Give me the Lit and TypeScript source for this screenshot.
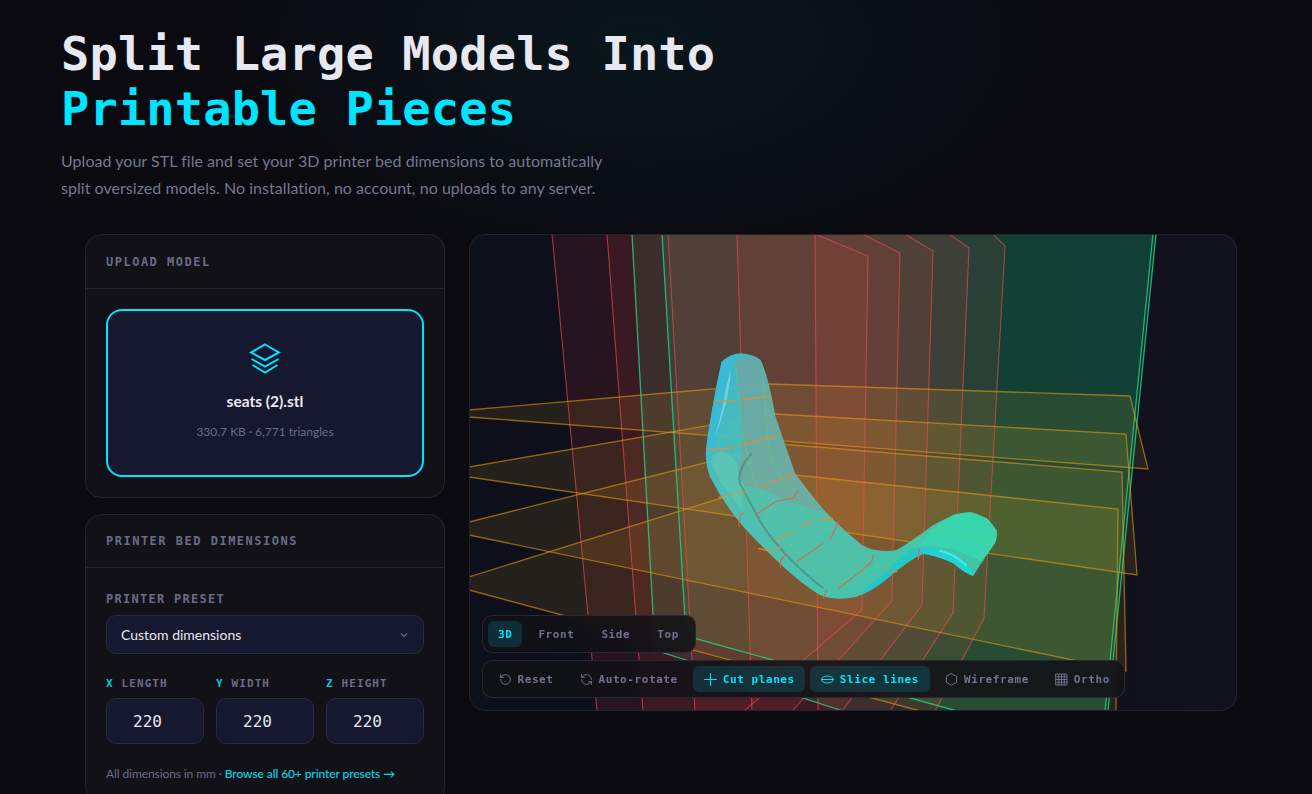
import { LitElement, html, css, svg } from "lit";
import { customElement } from "lit/decorators.js";

type Pt = [number, number];
const pts = (p: Pt[]) => p.map((q) => q.join(",")).join(" ");

const RED: Pt[][] = [
  [[552,234],[815,234],[868,256],[862,610],[744,711],[597,711]],
  [[607,234],[862,234],[900,253],[892,601],[792,711],[643,711]],
  [[668,234],[905,234],[933,251],[922,605],[842,711],[695,711]],
  [[737,234],[949,234],[969,248],[953,613],[890,711],[752,711]],
  [[815,234],[993,234],[1005,246],[984,618],[935,711],[818,711]],
];
const GREEN: Pt[][] = [
  [[632,234],[1153,234],[1105,711],[843,711],[655,650]],
  [[662,234],[1156,234],[1108,711],[957,711],[686,636]],
];
const YELLOW: Pt[][] = [
  [[469,410],[770,384],[1130,396],[1148,469],[469,417]],
  [[469,467],[775,414],[1126,434],[1137,575],[469,477]],
  [[469,522],[780,444],[1122,472],[1126,671],[469,535]],
  [[469,577],[795,475],[1118,509],[1116,711],[920,711],[469,590]],
];

const ORANGE_SLICES = [
  "M105 182Q140 184 170 181M185 179L272 169",
  "M78 325Q130 328 160 322M175 318L295 287",
  "M115 472L160 464M175 458L200 455M240 440L345 402",
  "M285 600L340 575M360 562L400 540M420 538L460 535",
  "M235 625Q270 635 285 630Q298 628 302 618",
  "M610 690L618 680M632 697L652 694",
];
const RED_SLICES = [
  "M178 562Q172 535 190 517",
  "M225 525L290 483L340 475L355 450",
  "M450 600L475 545",
  "M302 682Q298 650 325 642",
  "M350 665L430 610",
  "M430 775L440 750",
  "M475 745L535 700L575 665L580 645",
  "M715 660L718 625",
];
const GREEN_SLICES = [
  "M165 65Q178 150 182 220Q190 330 240 470Q290 580 370 650Q440 710 525 742",
  "M245 70Q255 170 265 320Q290 400 320 450Q350 500 400 540",
  "M540 692Q620 680 680 640Q740 575 790 555Q860 530 920 590Q925 640 905 672",
  "M690 610Q760 560 800 575Q860 575 935 620",
];

const TABS = [
  { label: "3D", on: true },
  { label: "Front" },
  { label: "Side" },
  { label: "Top" },
];

const ICONS = {
  reset: svg`<path d="M3 12a9 9 0 1 0 9-9 9.75 9.75 0 0 0-6.74 2.74L3 8"/><path d="M3 3v5h5"/>`,
  rotate: svg`<path d="M21 12a9 9 0 0 0-9-9 9.75 9.75 0 0 0-6.74 2.74L3 8"/><path d="M3 3v5h5"/><path d="M3 12a9 9 0 0 0 9 9 9.75 9.75 0 0 0 6.74-2.74L21 16"/><path d="M16 16h5v5"/>`,
  plus: svg`<path d="M12 1v22M1 12h22"/>`,
  slice: svg`<ellipse cx="12" cy="12" rx="11" ry="6.5"/><path d="M1 12h22"/>`,
  hex: svg`<path d="M12 1.5l9.5 5.2v10.6L12 22.5l-9.5-5.2V6.7z"/>`,
  grid: svg`<rect x="2" y="2" width="20" height="20"/><path d="M7 2v20M12 2v20M17 2v20M2 7h20M2 12h20M2 17h20"/>`,
};

const ACTIONS = [
  { label: "Reset", icon: ICONS.reset },
  { label: "Auto-rotate", icon: ICONS.rotate },
  { label: "Cut planes", icon: ICONS.plus, on: true },
  { label: "Slice lines", icon: ICONS.slice, on: true },
  { label: "Wireframe", icon: ICONS.hex },
  { label: "Ortho", icon: ICONS.grid },
];

const DIMS = [
  { axis: "X", name: "LENGTH" },
  { axis: "Y", name: "WIDTH" },
  { axis: "Z", name: "HEIGHT" },
];

@customElement("app-root")
export class AppRoot extends LitElement {
  static styles = css`
    :host {
      display: block;
      width: 1312px;
      height: 794px;
      overflow: hidden;
      background:
        radial-gradient(ellipse 420px 230px at 640px 40px, rgba(0, 229, 255, 0.055), transparent 100%),
        #0a0a10;
      color: #e8e8f0;
      font-family: "Lato", "Open Sans", sans-serif;
    }
    .hero { padding: 26px 0 0 61px; height: 234px; box-sizing: border-box; }
    h1 {
      margin: 0;
      font: 700 47px/55px "DejaVu Sans Mono", monospace;
      letter-spacing: 0.15px;
      color: #e8e8f0;
    }
    h1 span { color: #00e5ff; display: block; }
    .hero p {
      margin: 11px 0 0;
      font-size: 16px;
      line-height: 27px;
      letter-spacing: 0.04px;
      color: #77778f;
      width: 560px;
    }
    .main { display: flex; gap: 24px; padding-left: 85px; align-items: flex-start; }
    .left { width: 360px; display: flex; flex-direction: column; gap: 16px; flex: none; }
    .card {
      background: #111117;
      border: 1px solid #23232c;
      border-radius: 16px;
      box-sizing: border-box;
    }
    .card-head {
      height: 54px;
      padding: 0 20px;
      display: flex;
      align-items: center;
      border-bottom: 1px solid #23232c;
      font: 700 12px "DejaVu Sans Mono", monospace;
      letter-spacing: 1.5px;
      color: #6b6b8a;
      box-sizing: border-box;
    }
    .card-head.b { height: 53px; }
    .card-body { padding: 20px; }
    .card-body.bed { padding-top: 23px; }
    .drop {
      height: 168px;
      border: 2px solid #00e5ff;
      border-radius: 16px;
      background: #161830;
      box-sizing: border-box;
      display: flex;
      flex-direction: column;
      align-items: center;
    }
    .drop svg { margin-top: 32px; display: block; fill: none; stroke: #00e5ff; stroke-width: 2; }
    .fname { margin-top: 16px; font-size: 15.5px; font-weight: 700; color: #e8e8f0; line-height: 20px; }
    .fmeta { margin-top: 12px; font-size: 12px; color: #6b6b8a; line-height: 18px; }
    .label {
      font: 700 12px/16px "DejaVu Sans Mono", monospace;
      letter-spacing: 1.28px;
      color: #6b6b8a;
    }
    .select {
      margin-top: 8px;
      height: 39px;
      background: #161830;
      border: 1px solid #2a2a3e;
      border-radius: 10px;
      box-sizing: border-box;
      display: flex;
      align-items: center;
      justify-content: space-between;
      padding: 0 15px 0 14px;
      font-size: 14px;
      color: #e8e8f0;
    }
    .select svg { fill: none; stroke: #6b6b8a; stroke-width: 1.2; display: block; }
    .dims { margin-top: 23px; display: grid; grid-template-columns: repeat(3, 1fr); gap: 12px; }
    .dim-label {
      font: 700 11px/14px "DejaVu Sans Mono", monospace;
      letter-spacing: 1.1px;
      color: #6b6b8a;
      white-space: pre;
    }
    .dim-label b { color: #00c8e0; }
    .input {
      margin-top: 7px;
      height: 46px;
      background: #161830;
      border: 1px solid #2a2a3e;
      border-radius: 10px;
      box-sizing: border-box;
      padding-left: 26px;
      display: flex;
      align-items: center;
      font: 400 16px "DejaVu Sans Mono", monospace;
      color: #e8e8f0;
    }
    .foot { margin-top: 21px; font-size: 12px; line-height: 18px; letter-spacing: -0.09px; color: #6b6b8a; white-space: nowrap; }
    .foot a { color: #00d8f0; font-weight: 500; }
    .viewer {
      position: relative;
      width: 768px;
      height: 477px;
      box-sizing: border-box;
      border-radius: 16px;
      overflow: hidden;
      background: linear-gradient(90deg, #0d0f1b, #11121e);
    }
    .viewer::after {
      content: "";
      position: absolute;
      inset: 0;
      border: 1px solid #23232c;
      border-radius: 16px;
      pointer-events: none;
    }
    .scene { position: absolute; inset: 0; display: block; }
    .bar {
      position: absolute;
      left: 13px;
      display: flex;
      gap: 5px;
      padding: 5px;
      box-sizing: border-box;
      background: rgba(17, 17, 23, 0.88);
      border: 1px solid rgba(50, 50, 60, 0.7);
      border-radius: 10px;
      backdrop-filter: blur(6px);
    }
    .tabs { top: 381px; height: 38px; width: 214px; gap: 1px; }
    .acts { top: 426px; height: 38px; width: 643px; }
    .btn {
      display: flex;
      align-items: center;
      gap: 6px;
      padding: 0 10.5px;
      height: 26px;
      border-radius: 6px;
      font: 700 11px "DejaVu Sans Mono", monospace;
      letter-spacing: 0.58px;
      color: #72728e;
      white-space: nowrap;
    }
    .tabs .btn { padding: 0 10px; margin-right: 2px; }
    .tabs .btn + .btn { padding: 0 13px; margin-right: 0; }
    .btn svg {
      width: 13px;
      height: 13px;
      fill: none;
      stroke: currentColor;
      stroke-width: 1.8;
      stroke-linecap: round;
      stroke-linejoin: round;
      flex: none;
    }
    .btn.on { background: rgba(0, 229, 255, 0.14); color: #00e5ff; }
  `;

  private scene() {
    return svg`
      <defs>
        <linearGradient id="tip" x1="0" y1="0" x2="1" y2="0">
          <stop offset="0" stop-color="#26c9cf"/><stop offset="1" stop-color="#1fd8d8"/>
        </linearGradient>
        <linearGradient id="body" x1="0.1" y1="0" x2="0.75" y2="1">
          <stop offset="0" stop-color="#3ec0d2"/>
          <stop offset="0.45" stop-color="#4cc7bf"/>
          <stop offset="1" stop-color="#3ecdb0"/>
        </linearGradient>
      </defs>
      ${GREEN.map((p) => svg`<polygon points=${pts(p)} fill="rgb(27,230,142)" fill-opacity="0.12"/>`)}
      ${RED.map((p) => svg`<polygon points=${pts(p)} fill="rgb(239,68,68)" fill-opacity="0.11"/>`)}
      ${YELLOW.map((p) => svg`<polygon points=${pts(p)} fill="rgb(245,190,40)" fill-opacity="0.1"/>`)}
      ${GREEN.map((p) => svg`<polyline points=${pts(p.slice(1).concat([p[0]]))} fill="none" stroke="#1fd48a" stroke-width="1.3" stroke-opacity="0.8"/>`)}
      ${RED.map((p) => svg`<polyline points=${pts(p.slice(1).concat([p[0]]))} fill="none" stroke="#ec4a52" stroke-width="1.1" stroke-opacity="0.65"/>`)}
      ${YELLOW.map((p) => svg`<polygon points=${pts(p)} fill="none" stroke="#e39a10" stroke-width="1.3" stroke-opacity="0.6"/>`)}
      <g transform="translate(680 340) scale(0.33333)">
        <path fill="url(#body)" fill-opacity="0.93" d="M125 65Q150 42 180 40Q220 42 242 60Q258 95 268 140Q280 190 285 225Q300 270 345 400Q385 455 440 520Q490 570 545 615Q590 640 650 630Q700 600 760 555Q820 520 870 515Q920 525 950 570Q960 600 915 650L880 708Q855 700 820 670Q780 650 730 640Q690 660 640 700Q590 745 530 770Q470 785 420 765Q370 735 310 680Q250 625 190 560Q130 490 90 410Q75 370 78 330Q85 270 100 190Q110 130 125 65Z"/>
        <path fill="#8a9a8c" fill-opacity="0.5" d="M165 60Q205 42 242 62Q268 130 285 225Q300 280 345 400Q385 455 430 515Q360 500 300 470Q240 440 195 440Q170 410 175 380Q190 340 185 290Q180 170 165 60Z"/>
        <path fill="#55bfa6" fill-opacity="0.55" d="M195 440Q240 440 300 470Q360 500 430 515Q490 570 545 615L580 635Q560 690 520 720Q470 745 430 745Q370 700 310 650Q250 590 190 510Q175 470 195 440Z"/>
        <path fill="#37bcd8" fill-opacity="0.8" d="M125 65Q140 50 165 50Q150 100 145 150Q135 230 105 310Q90 340 90 360Q82 350 78 330Q85 270 100 190Q110 130 125 65Z"/>
        <path fill="#a8e0e0" fill-opacity="0.6" d="M152 90Q140 130 130 190Q120 240 102 300Q125 240 140 180Q150 130 152 90Z"/>
        <path fill="#66c9b0" fill-opacity="0.6" d="M95 350Q140 310 175 380Q170 410 195 440Q175 470 190 510Q150 470 120 420Q100 390 95 350Z"/>
        <path fill="none" stroke="#4d7d78" stroke-opacity="0.6" stroke-width="6" d="M215 340Q170 390 180 430Q200 470 250 560Q320 660 430 745"/>
        <path fill="#1ec8cc" fill-opacity="0.85" d="M560 740Q620 700 660 650Q700 615 740 625Q800 640 850 675L880 708Q855 700 820 670Q780 650 730 640Q690 660 640 700Q600 740 540 768Z"/>
        <path fill="url(#tip)" d="M715 625Q770 615 830 650Q870 675 880 708Q855 700 820 670Q780 650 730 642L712 650Z"/>
        <path fill="#38d6ae" d="M715 618Q760 555 820 524Q870 510 920 535Q960 570 945 610L905 665Q880 650 840 635Q780 612 715 622Z"/>
        <path fill="none" stroke="#3df0ee" stroke-width="6" stroke-linecap="round" d="M780 632Q820 640 858 675"/>
        <path fill="none" stroke="#55e05c" stroke-width="1.6" stroke-opacity="0.7" d=${GREEN_SLICES.join("")}/>
        <path fill="none" stroke="#f28a22" stroke-width="3.4" stroke-opacity="0.9" d=${ORANGE_SLICES.join("")}/>
        <path fill="none" stroke="#ee5a48" stroke-width="3.2" stroke-opacity="0.95" d=${RED_SLICES.join("")}/>
      </g>
    `;
  }

  render() {
    return html`
      <header class="hero">
        <h1>Split Large Models Into<span>Printable Pieces</span></h1>
        <p>Upload your STL file and set your 3D printer bed dimensions to automatically split oversized models. No installation, no account, no uploads to any server.</p>
      </header>
      <div class="main">
        <div class="left">
          <section class="card">
            <div class="card-head">UPLOAD MODEL</div>
            <div class="card-body">
              <div class="drop">
                <svg width="32" height="32" viewBox="0 0 32 32">
                  <path d="M16 1.5L30 9.5L16 17L2 9.5Z"/>
                  <path d="M2.5 16L16 23.5L29.5 16"/>
                  <path d="M3.5 22L16 29.5L28.5 22"/>
                </svg>
                <div class="fname">seats (2).stl</div>
                <div class="fmeta">330.7 KB · 6,771 triangles</div>
              </div>
            </div>
          </section>
          <section class="card">
            <div class="card-head b">PRINTER BED DIMENSIONS</div>
            <div class="card-body bed">
              <div class="label">PRINTER PRESET</div>
              <div class="select">
                <span>Custom dimensions</span>
                <svg width="8" height="6" viewBox="0 0 8 6"><path d="M1 1.5L4 4.5L7 1.5"/></svg>
              </div>
              <div class="dims">
                ${DIMS.map(
                  (d) => html`<div>
                    <div class="dim-label"><b>${d.axis}</b> ${d.name}</div>
                    <div class="input">220</div>
                  </div>`
                )}
              </div>
              <div class="foot">All dimensions in mm · <a>Browse all 60+ printer presets →</a></div>
            </div>
          </section>
        </div>
        <div class="viewer">
          <svg class="scene" viewBox="469 234 768 477" width="768" height="477">${this.scene()}</svg>
          <div class="bar tabs">
            ${TABS.map((t) => html`<div class="btn ${t.on ? "on" : ""}">${t.label}</div>`)}
          </div>
          <div class="bar acts">
            ${ACTIONS.map(
              (a) => html`<div class="btn ${a.on ? "on" : ""}"><svg viewBox="0 0 24 24">${a.icon}</svg>${a.label}</div>`
            )}
          </div>
        </div>
      </div>
    `;
  }
}
